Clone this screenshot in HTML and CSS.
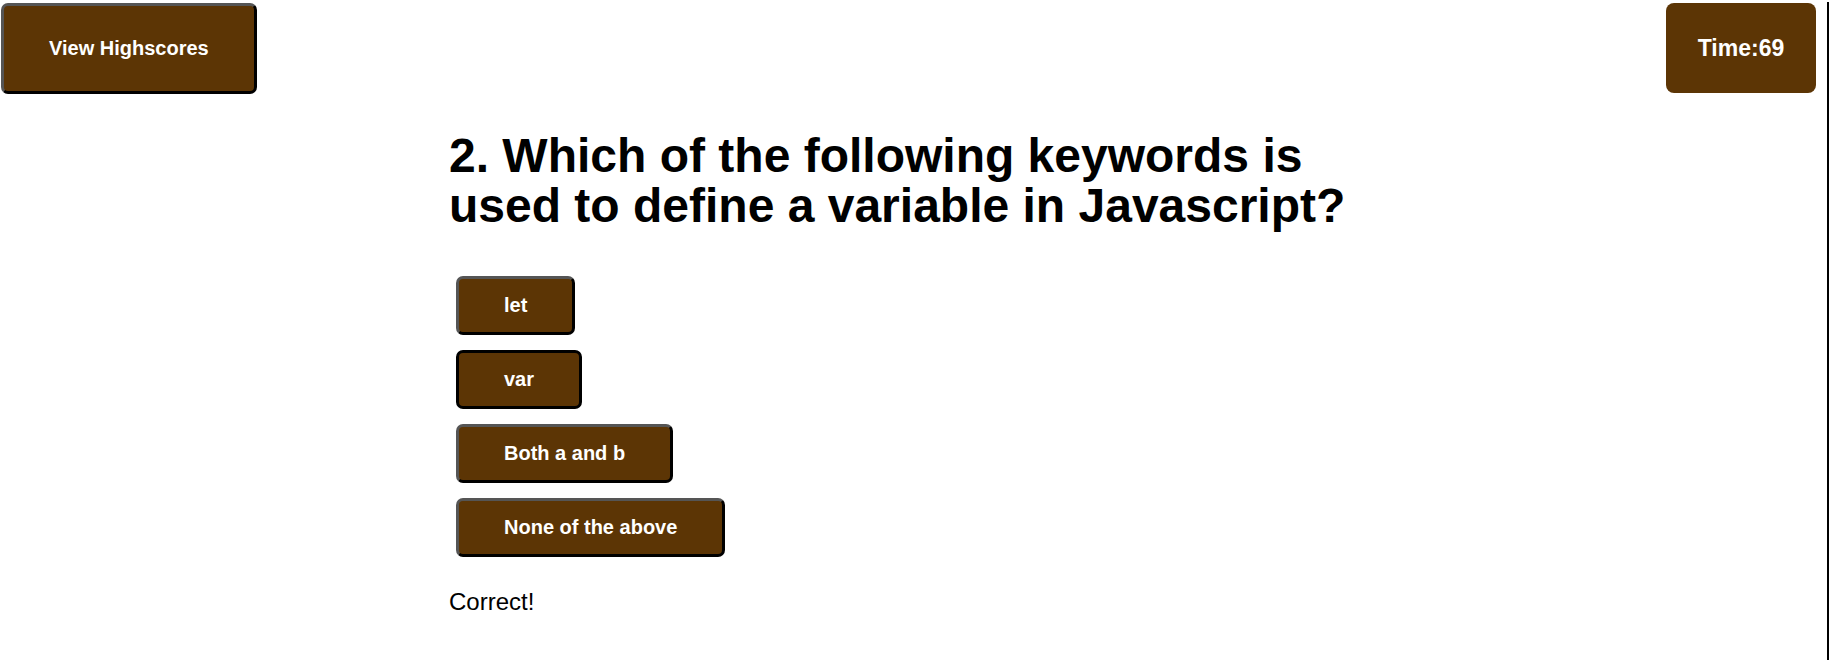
FILE: index.html
```html
<!DOCTYPE html>
<html lang="en">
<head>
<meta charset="utf-8">
<title>Code Quiz</title>
<link rel="stylesheet" href="styles.css">
</head>
<body>
<div class="page">
  <header class="topbar">
    <button class="btn btn-high">View Highscores</button>
    <div class="timer">Time:69</div>
  </header>
  <main class="quiz">
    <h1 class="question">2. Which of the following keywords is used to define a variable in Javascript?</h1>
    <div class="answers">
      <button class="btn answer">let</button>
      <button class="btn answer answer-active">var</button>
      <button class="btn answer">Both a and b</button>
      <button class="btn answer">None of the above</button>
    </div>
    <p class="feedback">Correct!</p>
  </main>
</div>
</body>
</html>
```
FILE: styles.css
```css
html, body {
  margin: 0;
  padding: 0;
  background: #fff;
}
body {
  font-family: "Liberation Sans", Arial, sans-serif;
  color: #000;
}
.page {
  min-height: 658px;
  margin-top: 2px;
  border-right: 2px solid #000;
}
.topbar {
  display: flex;
  justify-content: space-between;
  align-items: flex-start;
  padding: 0 11px 0 1px;
}
.btn {
  font-family: "Liberation Sans", Arial, sans-serif;
  font-weight: bold;
  font-size: 20px;
  line-height: 23px;
  color: #fff;
  background: #5c3505;
  border: 3px solid;
  border-color: #555 #000 #000 #555;
  border-radius: 7px;
  padding: 15px 45px;
  cursor: pointer;
}
.btn-high {
  margin-top: 1px;
  padding: 31px 45px 31px;
}
.timer {
  margin-top: 1px;
  width: 150px;
  height: 90px;
  box-sizing: border-box;
  display: flex;
  align-items: center;
  justify-content: center;
  background: #5c3505;
  color: #fff;
  font-weight: bold;
  font-size: 23px;
  border-radius: 8px;
}
.quiz {
  padding-left: 449px;
  width: 930px;
}
.question {
  margin: 37px 0 0;
  font-size: 48px;
  line-height: 50px;
  font-weight: bold;
}
.answers {
  display: flex;
  flex-direction: column;
  align-items: flex-start;
  gap: 15px;
  margin-top: 45px;
  padding-left: 7px;
}
.answer-active {
  border-color: #000;
}
.feedback {
  margin: 31px 0 0;
  font-size: 24px;
}
```
